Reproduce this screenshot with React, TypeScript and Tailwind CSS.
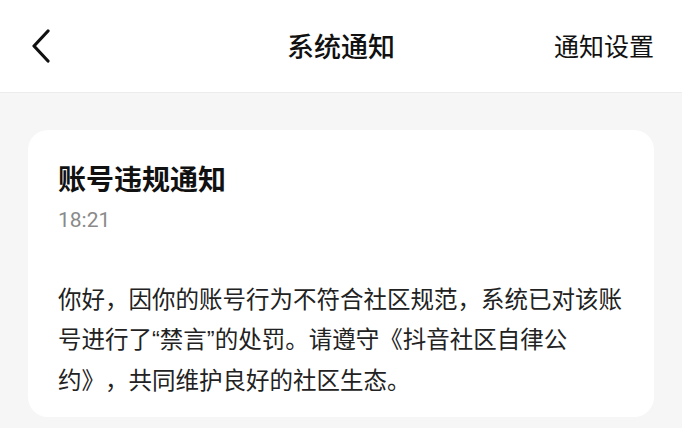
import React from "react";

const font = { fontFamily: '"Noto Sans CJK SC", "Noto Sans", sans-serif' };

function BackIcon() {
  return (
    <svg width="22" height="34" viewBox="0 0 22 34" fill="none">
      <path d="M18 2 L4 17 L18 32" stroke="#111" strokeWidth="3.2" strokeLinecap="round" strokeLinejoin="round" />
    </svg>
  );
}

// narrow latin quotes, like the reference
function Q({ children }: { children: React.ReactNode }) {
  return <span className="font-['Liberation_Sans',sans-serif]">{children}</span>;
}

export default function App() {
  return (
    <div className="w-[682px] h-[428px] overflow-hidden bg-[#f6f6f6]" style={font}>
      <div className="h-[93px] bg-white border-b border-[#ececec] flex items-center justify-between px-[30px] relative">
        <BackIcon />
        <div className="absolute left-0 right-0 text-center text-[27px] font-medium text-[#111] pointer-events-none">
          系统通知
        </div>
        <div className="text-[25px] text-[#111] mr-[-2px]">通知设置</div>
      </div>

      <div className="mx-[28px] mt-[37px] rounded-[20px] bg-white px-[30px] pt-[28px] pb-[17px]">
        <div className="text-[28px] font-bold text-[#111] leading-[40px]">账号违规通知</div>
        <div className="mt-[8px] text-[21px] text-[#8a8a8a] leading-[28px] font-['Roboto',sans-serif]">18:21</div>
        <p className="mt-[45px] text-[23.5px] text-[#222] leading-[39.5px] [text-spacing-trim:space-all]">
          你好，因你的账号行为不符合社区规范，系统已对该账号进行了<Q>“</Q>禁言<Q>”</Q>的处罚。请遵守《抖音社区自律公约》，共同维护良好的社区生态。
        </p>
      </div>
    </div>
  );
}
